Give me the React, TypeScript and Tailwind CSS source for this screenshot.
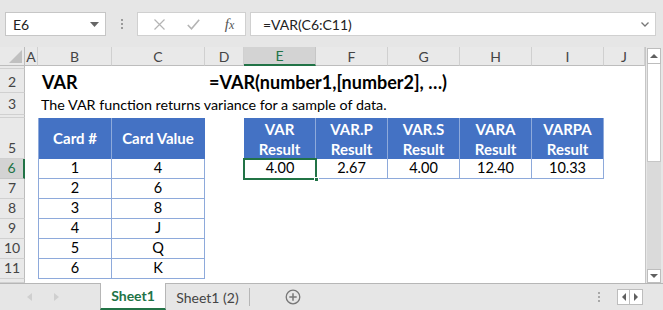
import React from "react";

const font = { fontFamily: "Lato, 'Open Sans', sans-serif" };

const cols = ["A", "B", "C", "D", "E", "F", "G", "H", "I", "J"];
// rows 1 and 4 are squeezed to a few pixels, so no label shows
const rowLabels = ["", "2", "3", "", "5", "6", "7", "8", "9", "10", "11", ""];

const cards = [
  ["1", "4"],
  ["2", "6"],
  ["3", "8"],
  ["4", "J"],
  ["5", "Q"],
  ["6", "K"],
];

const results = [
  ["VAR", "4.00"],
  ["VAR.P", "2.67"],
  ["VAR.S", "4.00"],
  ["VARA", "12.40"],
  ["VARPA", "10.33"],
];

function FormulaBar() {
  return (
    <div className="h-[47px] bg-[#e6e6e6] flex items-start pt-[12px] pl-[5px] pr-[7px] gap-0">
      <div className="w-[101px] h-[24px] bg-white border border-[#c6c6c6] flex items-center justify-between pl-[7px] pr-[6px] text-[14px] text-[#222]">
        <span>E6</span>
        <svg width="9" height="5" viewBox="0 0 9 5"><path d="M0 0h9L4.5 5z" fill="#666" /></svg>
      </div>
      <div className="w-[31px] h-[24px] flex flex-col items-center justify-center gap-[2px]">
        <span className="w-[2px] h-[2px] bg-[#9a9a9a]" />
        <span className="w-[2px] h-[2px] bg-[#9a9a9a]" />
        <span className="w-[2px] h-[2px] bg-[#9a9a9a]" />
      </div>
      <div className="w-[109px] h-[24px] bg-white border border-[#d0d0d0] flex items-center">
        <div className="w-[42px] flex justify-center">
          <svg width="11" height="11" viewBox="0 0 11 11"><path d="M0.5 0.5L10.5 10.5M10.5 0.5L0.5 10.5" stroke="#b4b4b4" strokeWidth="1.2" /></svg>
        </div>
        <div className="w-[26px] flex justify-center">
          <svg width="13" height="11" viewBox="0 0 13 11"><path d="M0.8 6L4.5 9.8L12.2 0.8" stroke="#b4b4b4" strokeWidth="1.6" fill="none" /></svg>
        </div>
        <div className="flex-1 flex justify-center pl-[8px]">
          <span className="italic text-[15px] text-[#555] leading-none" style={{ fontFamily: "'Liberation Serif', serif" }}>
            f<span className="text-[12px]">x</span>
          </span>
        </div>
      </div>
      <div className="ml-[4px] flex-1 h-[24px] bg-white border border-[#d0d0d0] flex items-center justify-between pl-[12px] pr-[6px] text-[14px] text-[#222]">
        <span>=VAR(C6:C11)</span>
        <svg width="8" height="5" viewBox="0 0 8 5"><path d="M0.5 0.5L4 4L7.5 0.5" stroke="#777" strokeWidth="1.3" fill="none" /></svg>
      </div>
    </div>
  );
}

function Sheet() {
  return (
    <div
      className="grid bg-white relative"
      style={{
        gridTemplateColumns: "25px 13px 74px 93px 39px 72px 72px 72px 72px 72px 41px",
        gridTemplateRows: "19px 3px 24px 22px 3px 41px 20px 20px 20px 20px 20px 20px 4px",
      }}
    >
      {/* corner */}
      <div className="col-start-1 row-start-1 bg-[#e9e9e9] border-r border-b border-[#bdbdbd] flex items-end justify-end pr-[2px] pb-[2px]">
        <svg width="13" height="13" viewBox="0 0 13 13"><path d="M13 0V13H0z" fill="#c0c0c0" /></svg>
      </div>
      {/* column headers */}
      {cols.map((c, i) => (
        <div
          key={c}
          className={
            c === "E"
              ? "row-start-1 bg-[#d3d3d3] border-r border-[#c6c6c6] border-b-2 border-b-[#217346] flex items-center justify-center text-[14px] text-[#217346]"
              : "row-start-1 bg-[#e9e9e9] border-r border-[#d0d0d0] border-b border-b-[#bdbdbd] flex items-center justify-center text-[14px] text-[#444]"
          }
          style={{ gridColumnStart: i + 2 }}
        >
          {c}
        </div>
      ))}
      {/* row headers */}
      {rowLabels.map((r, i) => (
        <div
          key={i}
          className={
            r === "6"
              ? "col-start-1 bg-[#d3d3d3] border-r-2 border-[#217346] border-b border-b-[#c6c6c6] flex items-end justify-center pb-[1px] text-[14px] text-[#217346] leading-[18px]"
              : "col-start-1 bg-[#e9e9e9] border-r border-[#bdbdbd] border-b border-b-[#d0d0d0] flex items-end justify-center pb-[1px] text-[14px] text-[#444] leading-[18px] overflow-hidden"
          }
          style={{ gridRowStart: i + 2 }}
        >
          {r}
        </div>
      ))}

      {/* Row 2 */}
      <div className="col-start-3 row-start-3 pl-[4px] flex items-end text-[18px] font-bold text-black leading-[22px] whitespace-nowrap">
        VAR
      </div>
      <div className="col-start-5 col-span-6 row-start-3 pl-[4px] flex items-end text-[18px] font-bold text-black leading-[22px] whitespace-nowrap">
        =VAR(number1,[number2], …)
      </div>
      {/* Row 3 */}
      <div className="col-start-3 col-span-8 row-start-4 pl-[3px] flex items-end text-[14.3px] text-black leading-[20px] whitespace-nowrap">
        The VAR function returns variance for a sample of data.
      </div>

      {/* Card table header */}
      <div className="col-start-3 row-start-6 bg-[#4472c4] border-l border-r border-[#8eaadb] flex items-center justify-center text-[15px] font-bold text-white">
        Card #
      </div>
      <div className="col-start-4 row-start-6 bg-[#4472c4] border-r border-[#4472c4] flex items-center justify-center text-[15px] font-bold text-white">
        Card Value
      </div>
      {cards.map((row, i) => (
        <React.Fragment key={i}>
          <div
            className="col-start-3 border-l border-r border-b border-[#8eaadb] flex items-end justify-center pb-[1px] text-[14.5px] text-black leading-[18px]"
            style={{ gridRowStart: i + 7 }}
          >
            {row[0]}
          </div>
          <div
            className="col-start-4 border-r border-b border-[#8eaadb] flex items-end justify-center pb-[1px] text-[14.5px] text-black leading-[18px]"
            style={{ gridRowStart: i + 7 }}
          >
            {row[1]}
          </div>
        </React.Fragment>
      ))}

      {/* Results table */}
      {results.map((r, i) => (
        <React.Fragment key={r[0]}>
          <div
            className="row-start-6 bg-[#4472c4] border-r border-[#8eaadb] flex flex-col items-center justify-center text-[15px] font-bold text-white leading-[20px]"
            style={{ gridColumnStart: i + 6 }}
          >
            <span>{r[0]}</span>
            <span>Result</span>
          </div>
          <div
            className={
              i === 0
                ? "row-start-7 border-l border-r border-b border-[#8eaadb] flex items-end justify-center pb-[1px] text-[14.5px] text-black leading-[18px]"
                : "row-start-7 border-r border-b border-[#8eaadb] flex items-end justify-center pb-[1px] text-[14.5px] text-black leading-[18px]"
            }
            style={{ gridColumnStart: i + 6 }}
          >
            {r[1]}
          </div>
        </React.Fragment>
      ))}

      {/* selection of E6 */}
      <div className="col-start-6 row-start-7 relative pointer-events-none">
        <div className="absolute -left-[1px] -top-[1px] -right-[1px] -bottom-[1px] border-2 border-[#217346]" />
        <div className="absolute -right-[3px] -bottom-[3px] w-[5px] h-[5px] bg-[#217346] border border-white" />
      </div>
    </div>
  );
}

function VScroll() {
  return (
    <div className="w-[18px] bg-[#e6e6e6] border-l border-[#c6c6c6] flex flex-col pl-[1px] pr-[2px] pt-[1px] pb-0">
      <div className="h-[16px] bg-white border border-[#bdbdbd] flex items-center justify-center">
        <svg width="8" height="4" viewBox="0 0 8 4"><path d="M0 4h8L4 0z" fill="#606060" /></svg>
      </div>
      <div className="h-[98px] bg-white border border-[#c6c6c6] border-t-0" />
      <div className="flex-1 bg-[#dadada]" />
      <div className="h-[14px] bg-white border border-[#bdbdbd] flex items-center justify-center">
        <svg width="8" height="4" viewBox="0 0 8 4"><path d="M0 0h8L4 4z" fill="#606060" /></svg>
      </div>
    </div>
  );
}

function TabBar() {
  return (
    <div className="h-[27px] bg-[#e6e6e6] border-t border-[#b6b6b6] flex items-stretch">
      <div className="w-[100px] flex items-center gap-[22px] pl-[27px]">
        <svg width="5" height="8" viewBox="0 0 5 8"><path d="M5 0V8L0 4z" fill="#cfcfcf" /></svg>
        <svg width="5" height="8" viewBox="0 0 5 8"><path d="M0 0V8L5 4z" fill="#cfcfcf" /></svg>
      </div>
      <div className="w-[66px] -mt-[1px] bg-white border-l border-r border-[#b6b6b6] border-b-2 border-b-[#217346] flex items-center justify-center text-[14px] font-bold text-[#217346]">
        Sheet1
      </div>
      <div className="w-[84px] flex items-center justify-center text-[14px] text-[#444] border-r border-[#b6b6b6] my-[4px]">
        Sheet1 (2)
      </div>
      <div className="w-[85px] flex items-center justify-center">
        <svg width="16" height="16" viewBox="0 0 16 16">
          <circle cx="8" cy="8" r="6.8" stroke="#777" strokeWidth="1.3" fill="none" />
          <path d="M8 4.3V11.7M4.3 8H11.7" stroke="#777" strokeWidth="1.5" />
        </svg>
      </div>
      <div className="flex-1" />
      <div className="w-[18px] flex flex-col items-center justify-center gap-[2px]">
        <span className="w-[2px] h-[2px] bg-[#a8a8a8]" />
        <span className="w-[2px] h-[2px] bg-[#a8a8a8]" />
        <span className="w-[2px] h-[2px] bg-[#a8a8a8]" />
      </div>
      <div className="flex items-center pr-[20px] pl-[9px]">
        <div className="w-[13px] h-[16px] bg-white border border-[#bdbdbd] flex items-center justify-center">
          <svg width="4" height="8" viewBox="0 0 4 8"><path d="M4 0V8L0 4z" fill="#606060" /></svg>
        </div>
        <div className="w-[13px] h-[16px] bg-white border border-l-0 border-[#bdbdbd] flex items-center justify-center">
          <svg width="4" height="8" viewBox="0 0 4 8"><path d="M0 0V8L4 4z" fill="#606060" /></svg>
        </div>
      </div>
    </div>
  );
}

export default function App() {
  return (
    <div className="w-[663px] h-[310px] overflow-hidden flex flex-col bg-[#e6e6e6]" style={font}>
      <FormulaBar />
      <div className="flex h-[236px] overflow-hidden">
        <Sheet />
        <VScroll />
      </div>
      <TabBar />
    </div>
  );
}
